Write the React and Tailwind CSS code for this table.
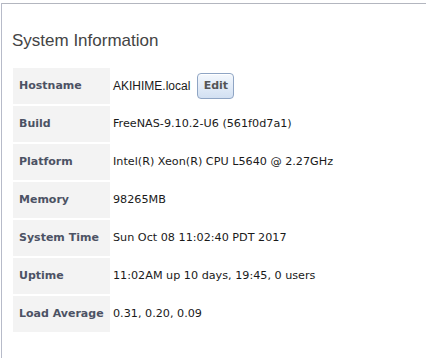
import React from "react";

const rows = [
  { label: "Hostname", value: "AKIHIME.local", edit: true },
  { label: "Build", value: "FreeNAS-9.10.2-U6 (561f0d7a1)" },
  { label: "Platform", value: "Intel(R) Xeon(R) CPU L5640 @ 2.27GHz" },
  { label: "Memory", value: "98265MB" },
  { label: "System Time", value: "Sun Oct 08 11:02:40 PDT 2017" },
  { label: "Uptime", value: "11:02AM up 10 days, 19:45, 0 users" },
  { label: "Load Average", value: "0.31, 0.20, 0.09" },
];

export default function App() {
  return (
    <div className="w-[426px] h-[358px] bg-white overflow-hidden pl-px">
      <div className="h-full border-l border-[#b7bbc9]">
        <div className="mt-[3px] h-px bg-[#b3b6bf]" />
        <h2 className="mt-[26px] ml-[10px] text-[17px] leading-[21px] text-[#444] font-['Liberation_Sans',Arial,sans-serif]">
          System Information
        </h2>
        <div className="mt-[17px] ml-[11px] grid grid-cols-[97px_1fr] gap-[2px] font-['DejaVu_Sans',Verdana,sans-serif] text-[11px]">
          {rows.map((r) => (
            <React.Fragment key={r.label}>
              <div className="h-[36px] bg-[#f3f3f3] flex items-center pl-[6px] font-bold text-[#4c5264] whitespace-nowrap">
                {r.label}
              </div>
              <div className="h-[36px] flex items-center pl-px text-[11.2px] text-[#1a1a1a] whitespace-nowrap">
                {r.edit ? (
                  <>
                    <span className="font-['Liberation_Sans',Arial,sans-serif] text-[12px]">
                      {r.value}
                    </span>
                    <button className="ml-[7px] w-[37px] h-[26px] rounded-[4px] border border-[#8fa5c4] bg-gradient-to-b from-[#f4f8fd] to-[#d2e0f2] text-[11px] font-bold text-[#555] shadow-[inset_0_1px_0_#fff]">
                      Edit
                    </button>
                  </>
                ) : (
                  r.value
                )}
              </div>
            </React.Fragment>
          ))}
        </div>
      </div>
    </div>
  );
}
